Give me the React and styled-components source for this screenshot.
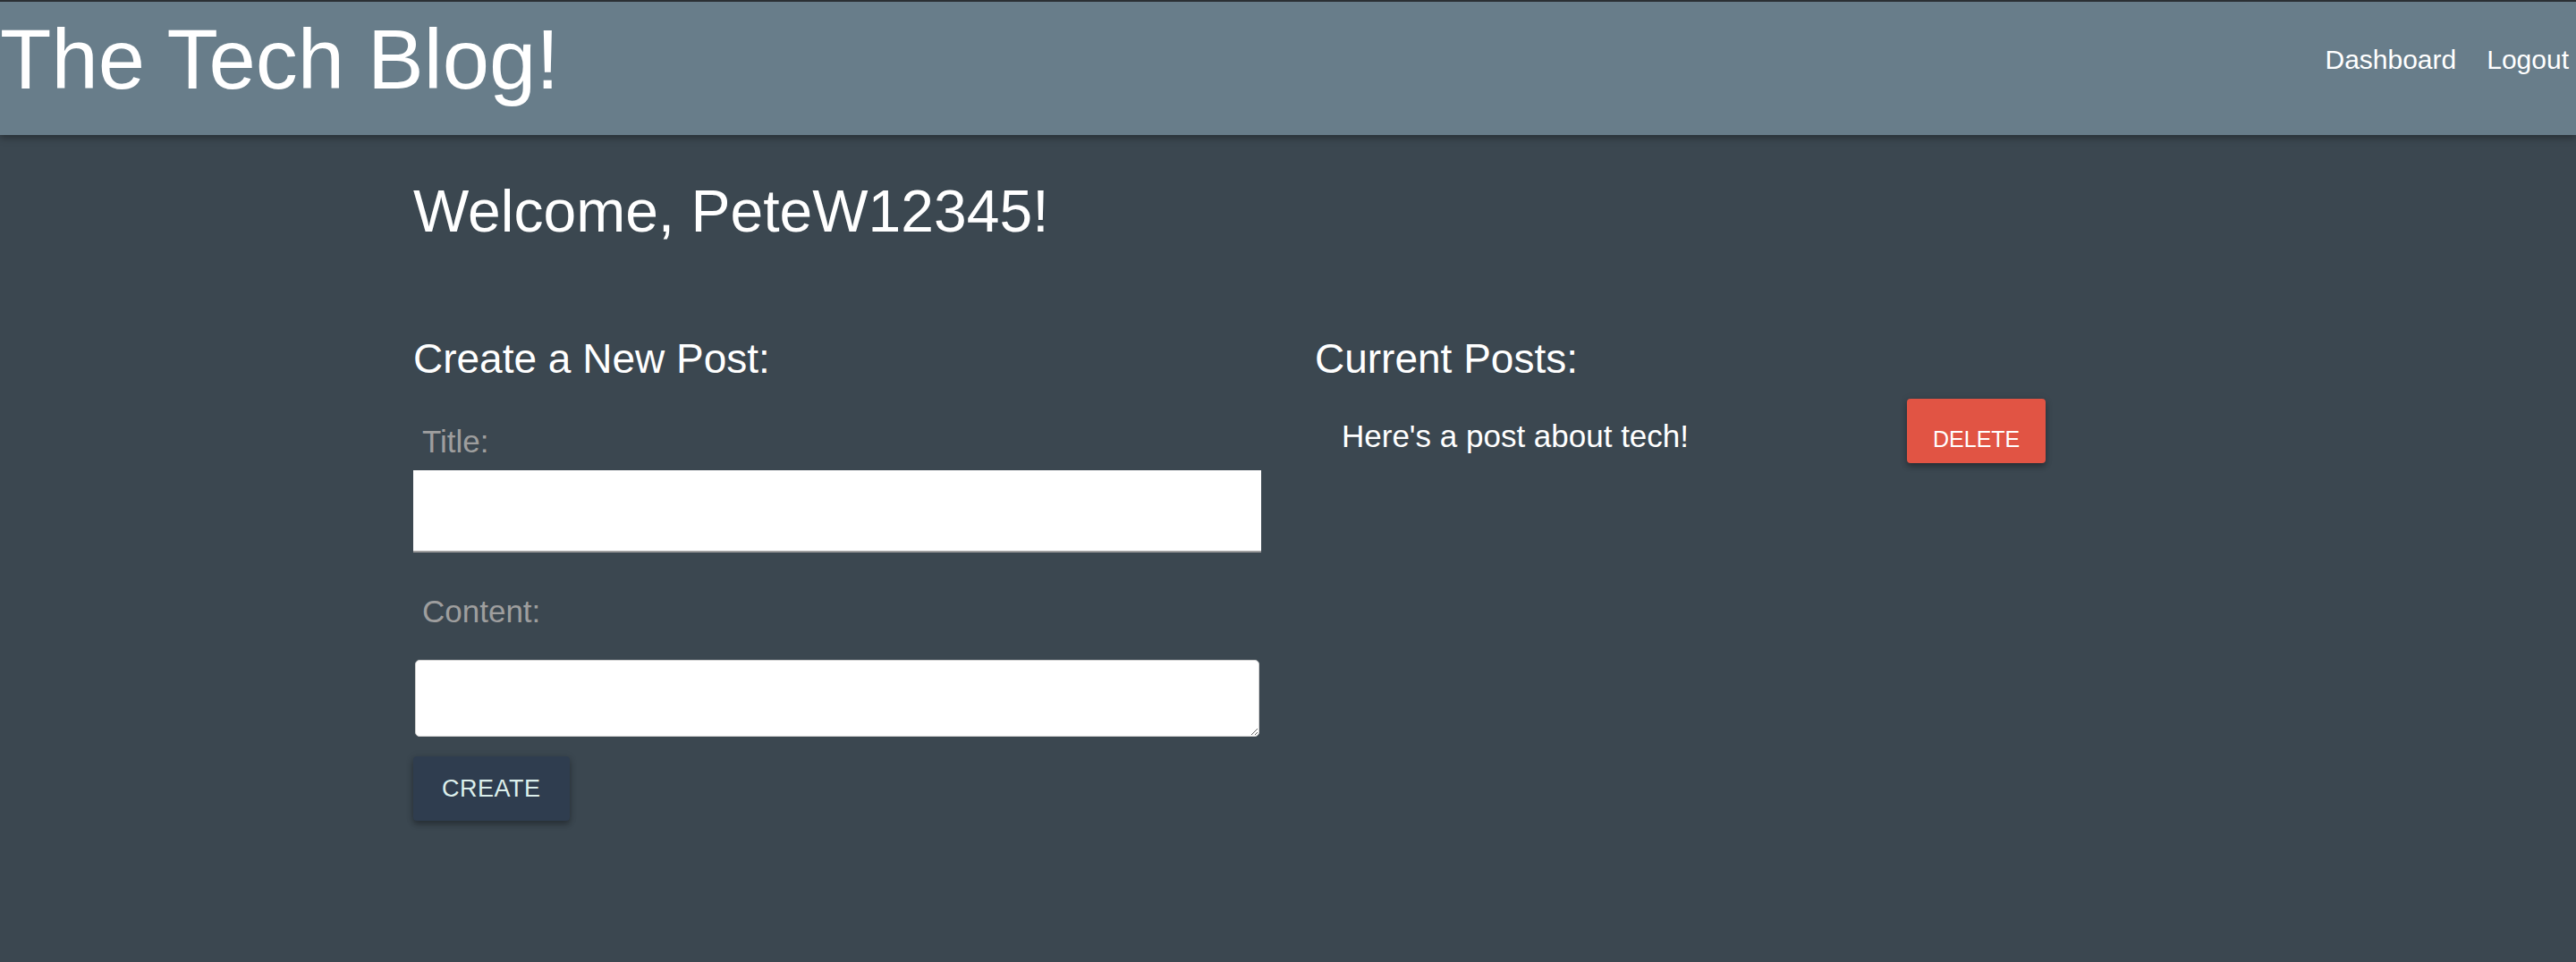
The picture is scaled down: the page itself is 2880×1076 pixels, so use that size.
import React from 'react'
import styled, { createGlobalStyle } from 'styled-components'

const GlobalStyle = createGlobalStyle`
  html, body {
    margin: 0;
    padding: 0;
    background: #3b4750;
  }
  body {
    font-family: "Liberation Sans", Arial, sans-serif;
    color: #fff;
  }
  * {
    box-sizing: border-box;
  }
`

export default function App () {
  return (
    <Page>
      <GlobalStyle />
      <Header>
        <Brand>The Tech Blog!</Brand>
        <Nav>
          <NavLink href='#'>Dashboard</NavLink>
          <NavLink href='#'>Logout</NavLink>
        </Nav>
      </Header>
      <Main>
        <Welcome>Welcome, PeteW12345!</Welcome>
        <Columns>
          <Column>
            <SectionTitle>Create a New Post:</SectionTitle>
            <Form onSubmit={e => e.preventDefault()}>
              <Label htmlFor='title'>Title:</Label>
              <TitleInput id='title' type='text' />
              <Label htmlFor='content' $spaced>Content:</Label>
              <ContentInput id='content' />
              <Button type='submit' $variant='create'>Create</Button>
            </Form>
          </Column>
          <Column>
            <SectionTitle>Current Posts:</SectionTitle>
            <PostList>
              <PostRow>
                <PostTitle>Here's a post about tech!</PostTitle>
                <Button type='button' $variant='delete'>Delete</Button>
              </PostRow>
            </PostList>
          </Column>
        </Columns>
      </Main>
    </Page>
  )
}

const Page = styled.div`
  min-height: 100vh;
  background: #3b4750;
`

const Header = styled.header`
  display: flex;
  align-items: center;
  justify-content: space-between;
  height: 151px;
  padding-bottom: 19px;
  border-top: 2px solid #2b3034;
  background: #687d8a;
  box-shadow: 0 3px 8px rgba(0, 0, 0, 0.35);
  position: relative;
  z-index: 1;
`

const Brand = styled.h1`
  margin: 0;
  font-size: 94px;
  font-weight: 400;
  line-height: 1;
  color: #fff;
`

const Nav = styled.nav`
  display: flex;
  gap: 34px;
  padding-right: 8px;
`

const NavLink = styled.a`
  font-size: 30px;
  line-height: 1;
  color: #fff;
  text-decoration: none;
`

const Main = styled.main`
  width: 1956px;
  margin: 0 auto;
  padding-top: 45px;
`

const Welcome = styled.h2`
  margin: 0;
  font-size: 66px;
  line-height: 80px;
  font-weight: 400;
`

const Columns = styled.div`
  display: grid;
  grid-template-columns: 948px 948px;
  gap: 60px;
  margin-top: 98px;
`

const Column = styled.section`
  display: flex;
  flex-direction: column;
`

const SectionTitle = styled.h3`
  margin: 0;
  font-size: 46px;
  line-height: 54px;
  font-weight: 400;
`

const Form = styled.form`
  display: flex;
  flex-direction: column;
  align-items: flex-start;
  padding-top: 46px;
`

const Label = styled.label`
  padding-left: 10px;
  font-size: 35px;
  line-height: 40px;
  color: #9e9e9e;
  margin-top: ${p => (p.$spaced ? '46px' : '0')};
`

const TitleInput = styled.input`
  width: 100%;
  height: 92px;
  margin-top: 12px;
  border: none;
  border-bottom: 2px solid #9e9e9e;
  border-radius: 0;
  background: #fff;
  outline: none;
  font-size: 32px;
  padding: 0 12px;
`

const ContentInput = styled.textarea`
  width: calc(100% - 4px);
  height: 86px;
  margin: 34px 2px 0;
  border: 1px solid #d0d0d0;
  border-radius: 5px;
  background: #fff;
  outline: none;
  font-size: 32px;
  font-family: inherit;
`

const Button = styled.button`
  border: none;
  border-radius: 4px;
  font-family: "Liberation Sans", Arial, sans-serif;
  text-transform: uppercase;
  cursor: pointer;
  box-shadow: 0 4px 6px rgba(0, 0, 0, 0.28), 0 1px 10px rgba(0, 0, 0, 0.12);
  ${p => p.$variant === 'create'
    ? `
      margin-top: 22px;
      height: 72px;
      padding: 0 32px;
      line-height: 72px;
      font-size: 27px;
      letter-spacing: 0.5px;
      background: #2f3d4f;
      color: #dcefec;
    `
    : `
      height: 72px;
      padding: 18px 29px 0;
      line-height: 54px;
      font-size: 25px;
      background: #e15444;
      color: #fff;
    `}
`

const PostList = styled.div`
  display: flex;
  flex-direction: column;
  padding-top: 18px;
`

const PostRow = styled.div`
  display: flex;
  align-items: baseline;
  padding-left: 30px;
`

const PostTitle = styled.span`
  flex: 0 0 632px;
  font-size: 35px;
  line-height: 40px;
  color: #fff;
`
